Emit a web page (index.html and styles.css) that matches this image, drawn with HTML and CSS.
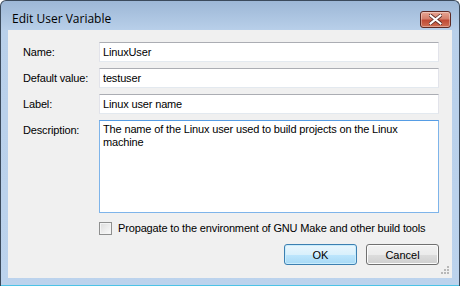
FILE: index.html
```html
<!DOCTYPE html>
<html lang="en">
<head>
    <meta charset="UTF-8">
    <title>Edit User Variable</title>
    <link rel="stylesheet" href="styles.css">
</head>
<body>
    <div class="window">
        <div class="titlebar">
            <span class="title">Edit User Variable</span>
            <button class="close" type="button">
                <svg width="13" height="11" viewBox="0 0 13 11">
                    <path d="M1.5 1.5 L11.5 9.5 M11.5 1.5 L1.5 9.5" stroke="#5a2a24" stroke-width="3.6" stroke-linecap="square"/>
                    <path d="M1.5 1.5 L11.5 9.5 M11.5 1.5 L1.5 9.5" stroke="#ffffff" stroke-width="2" stroke-linecap="square"/>
                </svg>
            </button>
        </div>
        <div class="client">
            <div class="fields">
                <label for="name">Name:</label>
                <input type="text" id="name" value="LinuxUser">

                <label for="defval">Default value:</label>
                <input type="text" id="defval" value="testuser">

                <label for="label">Label:</label>
                <input type="text" id="label" value="Linux user name">

                <label for="desc">Description:</label>
                <textarea id="desc">The name of the Linux user used to build projects on the Linux
machine</textarea>
            </div>

            <div class="check-row">
                <span class="checkbox"></span>
                <span class="check-label">Propagate to the environment of GNU Make and other build tools</span>
            </div>

            <div class="buttons">
                <button type="button" class="btn btn-default">OK</button>
                <button type="button" class="btn">Cancel</button>
            </div>

            <div class="grip">
                <svg width="10" height="10" viewBox="0 0 10 10">
                    <g fill="#b8b8b8">
                        <rect x="8" y="0" width="2" height="2"/>
                        <rect x="5" y="3" width="2" height="2"/>
                        <rect x="8" y="3" width="2" height="2"/>
                        <rect x="2" y="6" width="2" height="2"/>
                        <rect x="5" y="6" width="2" height="2"/>
                        <rect x="8" y="6" width="2" height="2"/>
                    </g>
                </svg>
            </div>
        </div>
        <div class="bottom-edge"></div>
    </div>
</body>
</html>
```

FILE: styles.css
```css
body {
    margin: 0;
    background-color: #ffffff;
    font-family: 'Liberation Sans', Arial, sans-serif;
    font-size: 11px;
    letter-spacing: -0.15px;
    color: #000;
}
.window {
    width: 460px;
    height: 286px;
    box-sizing: border-box;
    border: 1px solid #3b4a5c;
    border-bottom: none;
    border-radius: 6px 6px 0 0;
    background: linear-gradient(#9db7d6, #b9d0ea 30px, #bcd3ed);
    padding: 0 7px 0 7px;
    display: flex;
    flex-direction: column;
}
.titlebar {
    height: 29px;
    display: flex;
    align-items: flex-start;
    justify-content: space-between;
}
.title {
    font-family: 'Open Sans', 'Noto Sans', sans-serif;
    font-size: 12px;
    letter-spacing: 0;
    margin: 10px 0 0 4px;
    line-height: 16px;
}
.close {
    width: 31px;
    height: 17px;
    margin-top: 10px;
    margin-right: 1px;
    padding: 0;
    border: 1px solid #5e2a24;
    border-radius: 3px;
    background: linear-gradient(#e7a593, #d5806c 45%, #c04a35 55%, #cf6f55);
    box-shadow: inset 0 0 0 1px rgba(255, 255, 255, .35);
    display: flex;
    align-items: center;
    justify-content: center;
}
.client {
    position: relative;
    height: 248px;
    box-sizing: border-box;
    background-color: #f0f0f0;
    padding: 12px 13px 0 15px;
}
.bottom-edge {
    margin: auto -7px 0;
    height: 1px;
    background-color: #4cc3e6;
}
.fields {
    display: grid;
    grid-template-columns: 76px 1fr;
    grid-template-rows: 20px 20px 20px 93px;
    row-gap: 6px;
}
.fields label {
    line-height: 20px;
}
.fields input,
.fields textarea {
    box-sizing: border-box;
    width: 100%;
    margin: 0;
    font-family: 'Liberation Sans', Arial, sans-serif;
    font-size: 11px;
    letter-spacing: -0.15px;
    color: #000;
    background: #fff;
    border: 1px solid #e2e3ea;
    border-top-color: #abadb3;
    border-bottom-color: #e3e9ef;
    outline: none;
}
.fields input {
    height: 20px;
    padding: 0 3px;
}
.fields textarea {
    height: 93px;
    padding: 2px 3px;
    line-height: 13px;
    resize: none;
    border-color: #7eb4ea;
    border-top-color: #569de5;
}
.check-row {
    display: flex;
    align-items: center;
    margin: 9px 0 0 76px;
    height: 13px;
}
.checkbox {
    width: 11px;
    height: 11px;
    border: 1px solid #8e8f8f;
    background: linear-gradient(135deg, #dcdcdc, #fbfbfb);
    box-shadow: inset 0 0 0 1px #f4f4f4;
    margin-right: 6px;
}
.check-label {
    line-height: 13px;
}
.buttons {
    display: flex;
    justify-content: flex-end;
    gap: 9px;
    margin-top: 9px;
}
.btn {
    width: 73px;
    height: 21px;
    padding: 0;
    font-family: 'Liberation Sans', Arial, sans-serif;
    font-size: 11px;
    color: #000;
    border: 1px solid #707070;
    border-radius: 3px;
    background: linear-gradient(#f2f2f2, #ebebeb 50%, #dddddd 50%, #cfcfcf);
    box-shadow: inset 0 0 0 1px #fcfcfc;
}
.btn-default {
    border-color: #3c7fb1;
    background: linear-gradient(#eaf6fd, #d9f0fc 50%, #bee6fd 50%, #a7d9f5);
    box-shadow: inset 0 0 0 1px #c9ecfc;
}
.grip {
    position: absolute;
    right: 3px;
    bottom: 2px;
    width: 10px;
    height: 10px;
}
.grip svg {
    display: block;
}
```
